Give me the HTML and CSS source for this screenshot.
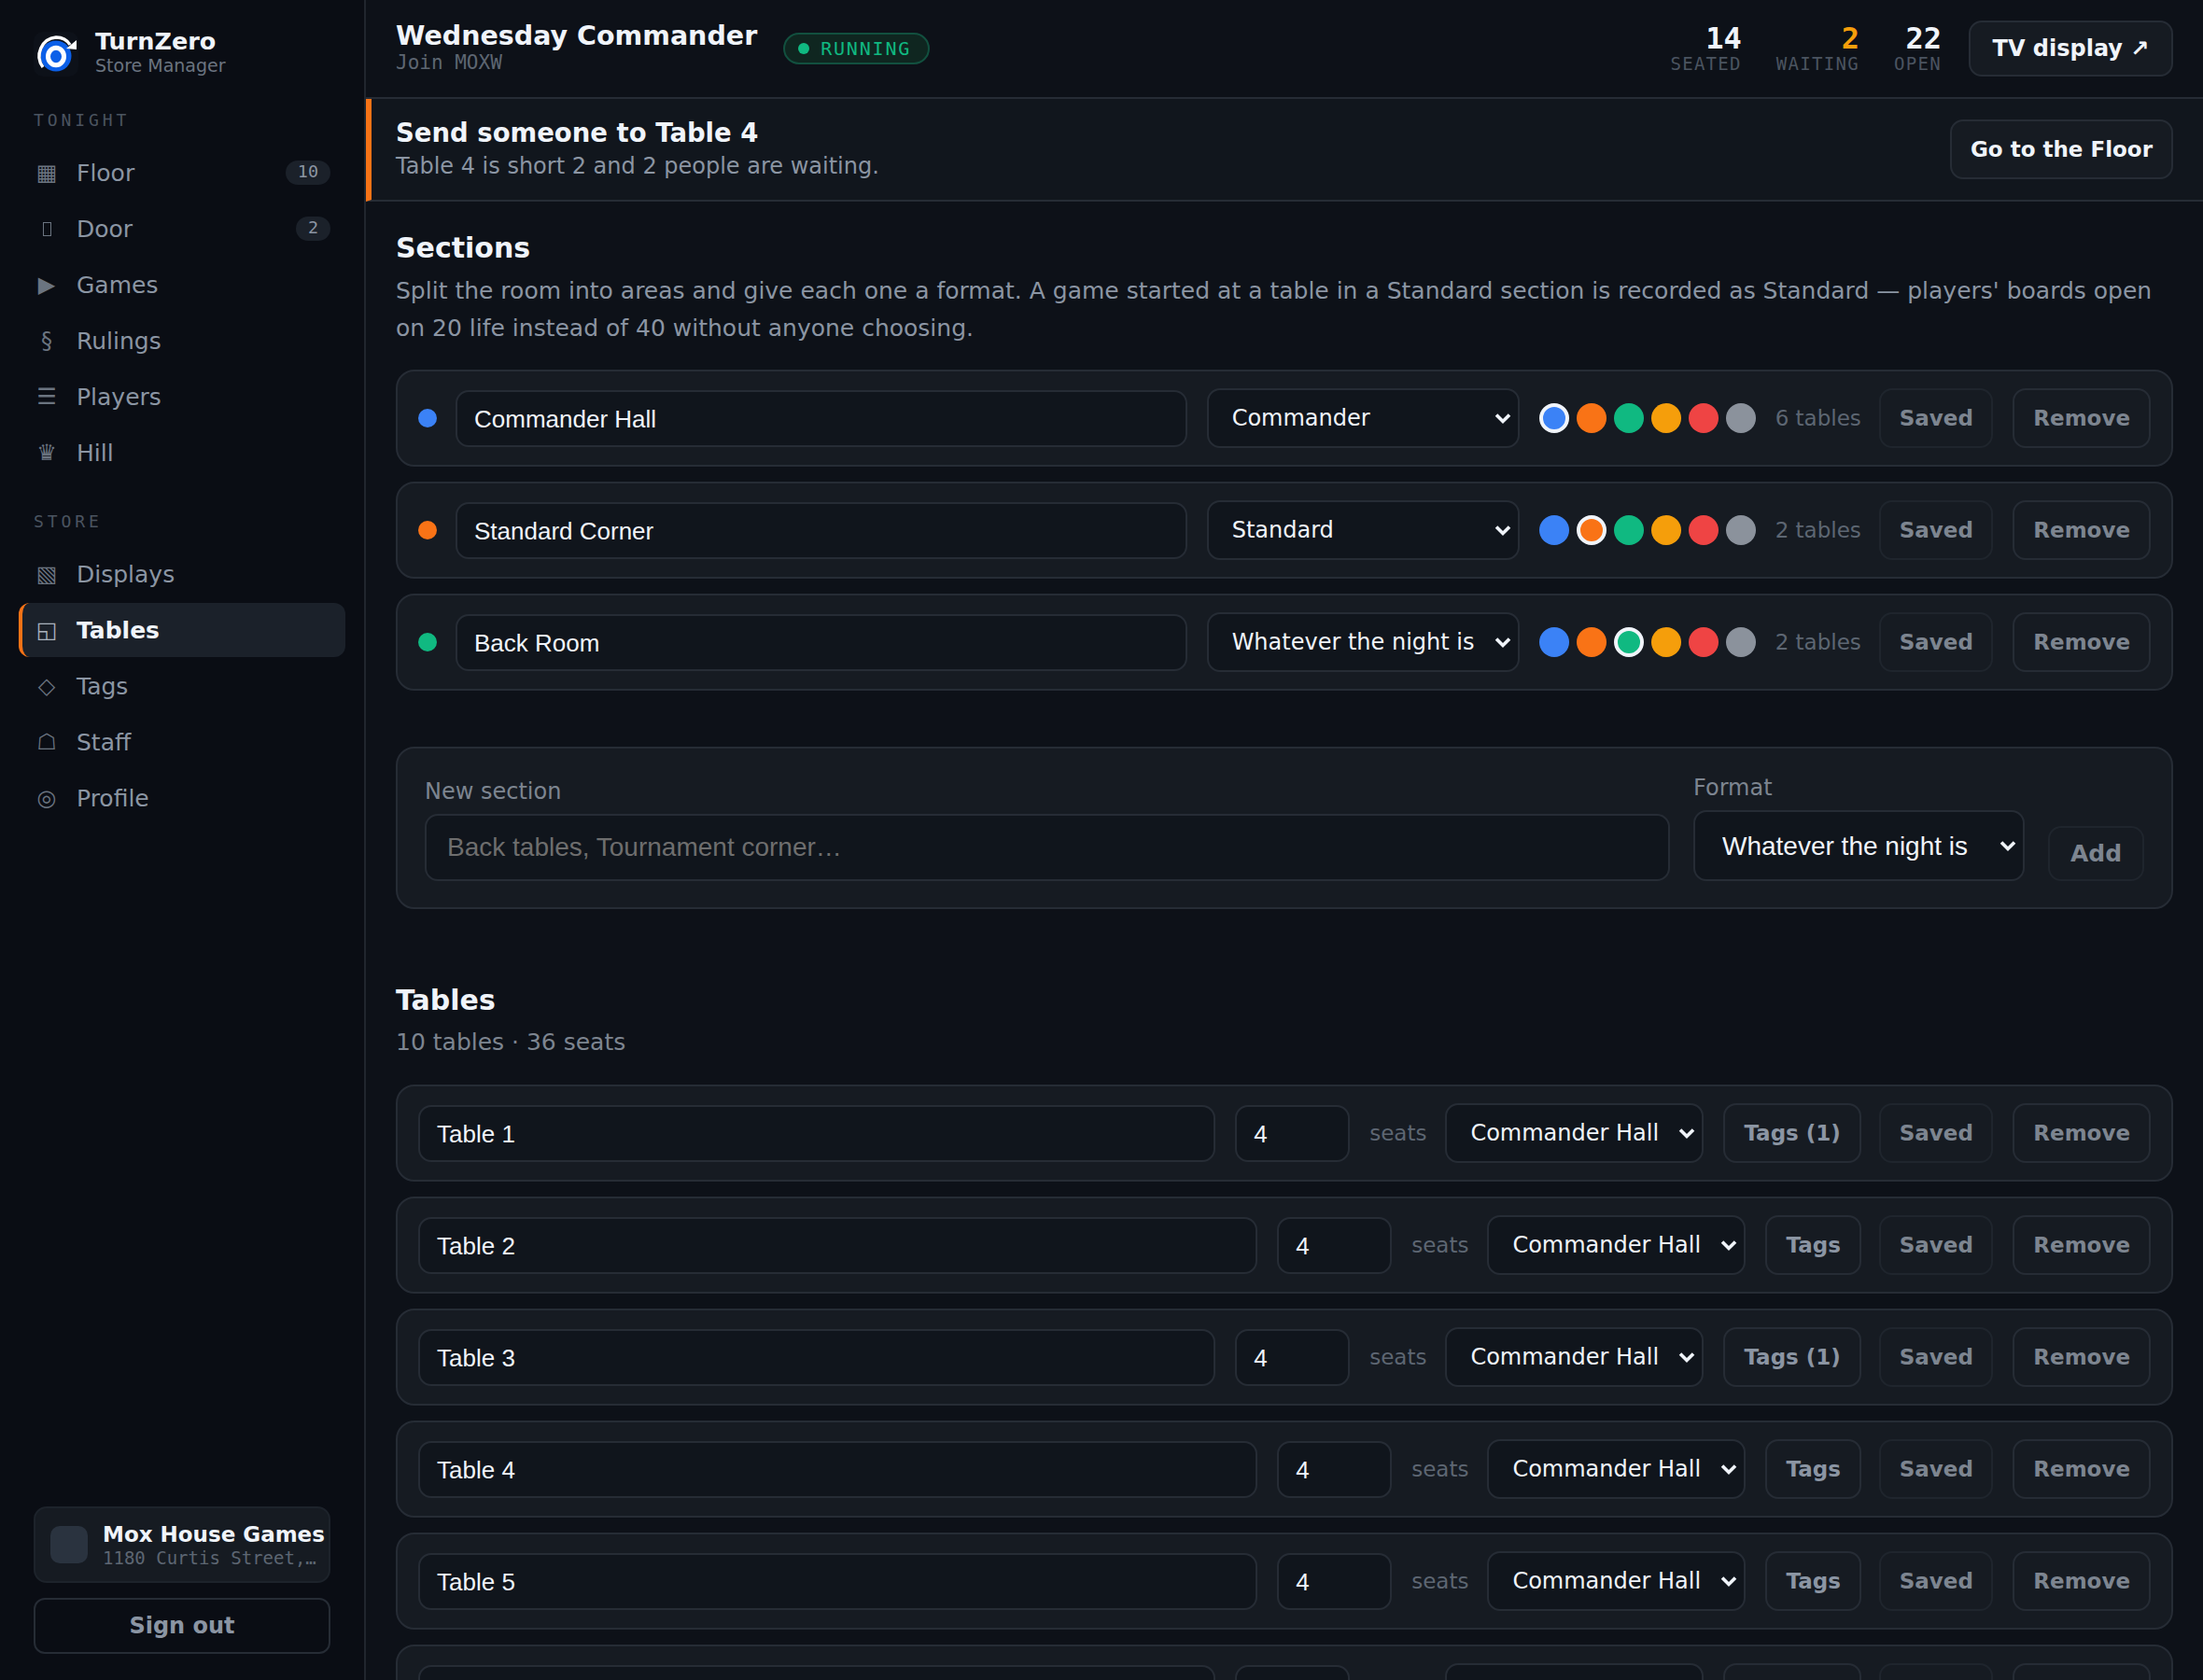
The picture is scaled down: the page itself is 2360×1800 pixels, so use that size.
FILE: index.html
```html
<!DOCTYPE html>
<html lang="en">
<head>
    <meta charset="UTF-8">
    <meta name="viewport" content="width=device-width, initial-scale=1.0">
    <title>TurnZero Store Manager</title>
    <link rel="stylesheet" href="styles.css">
</head>
<body>
    <aside class="sidebar">
        <div class="brand">
            <svg class="logo" width="48" height="48" viewBox="0 0 48 48">
                <rect width="48" height="48" rx="10" fill="#0d1119"/>
                <circle cx="24" cy="26" r="16.5" fill="#0b5fe8"/>
                <ellipse cx="24" cy="26.5" rx="8.5" ry="9.25" fill="none" stroke="#fff" stroke-width="5"/>
                <path d="M10 38 A 19.5 20 0 0 1 24 6 C 31 6 36 9 39 14" fill="none" stroke="#fff" stroke-width="3.4"/>
                <path d="M46 9 L46 19 L35 18 Z" fill="#fff"/>
            </svg>
            <div class="brand-text">
                <div class="brand-name">TurnZero</div>
                <div class="brand-sub">Store Manager</div>
            </div>
        </div>

        <div class="nav-label">TONIGHT</div>
        <nav class="nav">
            <a class="nav-item"><span class="nav-icon">▦</span>Floor<span class="badge">10</span></a>
            <a class="nav-item"><span class="nav-icon"><span class="door"></span></span>Door<span class="badge">2</span></a>
            <a class="nav-item"><span class="nav-icon">▶</span>Games</a>
            <a class="nav-item"><span class="nav-icon">§</span>Rulings</a>
            <a class="nav-item"><span class="nav-icon">☰</span>Players</a>
            <a class="nav-item"><span class="nav-icon">♛</span>Hill</a>
        </nav>

        <div class="nav-label nav-label-store">STORE</div>
        <nav class="nav">
            <a class="nav-item"><span class="nav-icon">▧</span>Displays</a>
            <a class="nav-item active"><span class="nav-icon">◱</span>Tables</a>
            <a class="nav-item"><span class="nav-icon">◇</span>Tags</a>
            <a class="nav-item"><span class="nav-icon">☖</span>Staff</a>
            <a class="nav-item"><span class="nav-icon">◎</span>Profile</a>
        </nav>

        <div class="side-foot">
            <div class="venue">
                <div class="venue-pic"></div>
                <div class="venue-text">
                    <div class="venue-name">Mox House Games</div>
                    <div class="venue-addr">1180 Curtis Street,…</div>
                </div>
            </div>
            <button class="signout">Sign out</button>
        </div>
    </aside>

    <main class="main">
        <header class="topbar">
            <div class="event">
                <div class="event-name">Wednesday Commander</div>
                <div class="event-join">Join MOXW</div>
            </div>
            <div class="pill"><span class="pill-dot"></span>RUNNING</div>
            <div class="stats">
                <div class="stat"><div class="stat-num">14</div><div class="stat-label">SEATED</div></div>
                <div class="stat"><div class="stat-num amber">2</div><div class="stat-label">WAITING</div></div>
                <div class="stat"><div class="stat-num">22</div><div class="stat-label">OPEN</div></div>
            </div>
            <button class="btn-top tv">TV display ↗</button>
        </header>

        <div class="alert">
            <div class="alert-text">
                <div class="alert-title">Send someone to Table 4</div>
                <div class="alert-sub">Table 4 is short 2 and 2 people are waiting.</div>
            </div>
            <button class="btn-top floor">Go to the Floor</button>
        </div>

        <div class="content">
            <h2 class="title">Sections</h2>
            <p class="intro">Split the room into areas and give each one a format. A game started at a table in a Standard section is recorded as Standard — players' boards open on 20 life instead of 40 without anyone choosing.</p>

            <div class="rows">
                <div class="row">
                    <span class="dot blue"></span>
                    <input class="field grow" type="text" value="Commander Hall">
                    <select class="sel sel-format"><option>Commander</option><option>Standard</option><option>Whatever the night is</option></select>
                    <div class="swatches"><span class="dot blue picked"></span><span class="dot orange"></span><span class="dot green"></span><span class="dot amberbg"></span><span class="dot red"></span><span class="dot grey"></span></div>
                    <span class="note">6 tables</span>
                    <button class="btn dim">Saved</button>
                    <button class="btn">Remove</button>
                </div>
                <div class="row">
                    <span class="dot orange"></span>
                    <input class="field grow" type="text" value="Standard Corner">
                    <select class="sel sel-format"><option>Standard</option><option>Commander</option><option>Whatever the night is</option></select>
                    <div class="swatches"><span class="dot blue"></span><span class="dot orange picked"></span><span class="dot green"></span><span class="dot amberbg"></span><span class="dot red"></span><span class="dot grey"></span></div>
                    <span class="note">2 tables</span>
                    <button class="btn dim">Saved</button>
                    <button class="btn">Remove</button>
                </div>
                <div class="row">
                    <span class="dot green"></span>
                    <input class="field grow" type="text" value="Back Room">
                    <select class="sel sel-format"><option>Whatever the night is</option><option>Commander</option><option>Standard</option></select>
                    <div class="swatches"><span class="dot blue"></span><span class="dot orange"></span><span class="dot green picked"></span><span class="dot amberbg"></span><span class="dot red"></span><span class="dot grey"></span></div>
                    <span class="note">2 tables</span>
                    <button class="btn dim">Saved</button>
                    <button class="btn">Remove</button>
                </div>
            </div>

            <form class="new-section">
                <label class="new-name">
                    <span class="new-label">New section</span>
                    <input class="new-field" type="text" placeholder="Back tables, Tournament corner…">
                </label>
                <label class="new-format">
                    <span class="new-label">Format</span>
                    <select class="new-sel"><option>Whatever the night is</option><option>Commander</option><option>Standard</option></select>
                </label>
                <button class="btn add" type="button">Add</button>
            </form>

            <h2 class="title title-tables">Tables</h2>
            <p class="count">10 tables · 36 seats</p>

            <div class="rows">
                <div class="row row-table">
                    <input class="field grow" type="text" value="Table 1">
                    <input class="field seats" type="number" value="4">
                    <span class="note">seats</span>
                    <select class="sel sel-section"><option>Commander Hall</option><option>Standard Corner</option><option>Back Room</option></select>
                    <button class="btn tags">Tags (1)</button>
                    <button class="btn dim">Saved</button>
                    <button class="btn">Remove</button>
                </div>
                <div class="row row-table">
                    <input class="field grow" type="text" value="Table 2">
                    <input class="field seats" type="number" value="4">
                    <span class="note">seats</span>
                    <select class="sel sel-section"><option>Commander Hall</option><option>Standard Corner</option><option>Back Room</option></select>
                    <button class="btn tags">Tags</button>
                    <button class="btn dim">Saved</button>
                    <button class="btn">Remove</button>
                </div>
                <div class="row row-table">
                    <input class="field grow" type="text" value="Table 3">
                    <input class="field seats" type="number" value="4">
                    <span class="note">seats</span>
                    <select class="sel sel-section"><option>Commander Hall</option><option>Standard Corner</option><option>Back Room</option></select>
                    <button class="btn tags">Tags (1)</button>
                    <button class="btn dim">Saved</button>
                    <button class="btn">Remove</button>
                </div>
                <div class="row row-table">
                    <input class="field grow" type="text" value="Table 4">
                    <input class="field seats" type="number" value="4">
                    <span class="note">seats</span>
                    <select class="sel sel-section"><option>Commander Hall</option><option>Standard Corner</option><option>Back Room</option></select>
                    <button class="btn tags">Tags</button>
                    <button class="btn dim">Saved</button>
                    <button class="btn">Remove</button>
                </div>
                <div class="row row-table">
                    <input class="field grow" type="text" value="Table 5">
                    <input class="field seats" type="number" value="4">
                    <span class="note">seats</span>
                    <select class="sel sel-section"><option>Commander Hall</option><option>Standard Corner</option><option>Back Room</option></select>
                    <button class="btn tags">Tags</button>
                    <button class="btn dim">Saved</button>
                    <button class="btn">Remove</button>
                </div>
                <div class="row row-table">
                    <input class="field grow" type="text" value="Table 6">
                    <input class="field seats" type="number" value="4">
                    <span class="note">seats</span>
                    <select class="sel sel-section"><option>Commander Hall</option><option>Standard Corner</option><option>Back Room</option></select>
                    <button class="btn tags">Tags (1)</button>
                    <button class="btn dim">Saved</button>
                    <button class="btn">Remove</button>
                </div>
            </div>
        </div>
    </main>
</body>
</html>
```

FILE: styles.css
```css
* {
    box-sizing: border-box;
}
body {
    height: 100vh;
    margin: 0;
    display: flex;
    overflow: hidden;
    background: #0d1118;
    color: #f0f4fa;
    font-family: "DejaVu Sans", sans-serif;
}
button {
    font-family: "DejaVu Sans", sans-serif;
    cursor: pointer;
}

/* sidebar */
.sidebar {
    width: 392px;
    flex-shrink: 0;
    display: flex;
    flex-direction: column;
    padding: 34px 20px 28px 20px;
    background: #0a0d14;
    border-right: 2px solid #21262e;
}
.brand {
    display: flex;
    align-items: center;
    gap: 18px;
    margin-bottom: 4px;
    padding-left: 16px;
}
.logo {
    flex-shrink: 0;
}
.brand-text {
    margin-top: -4px;
}
.brand-name {
    font-size: 25.5px;
    font-weight: 700;
    line-height: 28px;
}
.brand-sub {
    font-size: 19px;
    line-height: 24px;
    color: #6b7480;
}
.nav-label {
    margin: 32px 0 16px 16px;
    font-family: "DejaVu Sans Mono", monospace;
    font-size: 18px;
    line-height: 22px;
    letter-spacing: 3.9px;
    color: #4b5460;
}
.nav-label-store {
    margin-top: 34px;
}
.nav {
    display: flex;
    flex-direction: column;
    gap: 2px;
}
.nav-item {
    display: flex;
    align-items: center;
    height: 58px;
    padding-left: 12px;
    padding-right: 16px;
    border-left: 4px solid transparent;
    border-radius: 12px;
    font-size: 25px;
    color: #8b95a3;
}
.nav-item.active {
    background: #1b212a;
    border-left-color: #f97316;
    color: #f0f4fa;
    font-weight: 700;
}
.nav-icon {
    display: flex;
    justify-content: center;
    align-items: center;
    width: 28px;
    margin-right: 18px;
    font-size: 24px;
    font-weight: 400;
    color: #6b7480;
}
.active .nav-icon {
    color: #a9b2bd;
}
/* this glyph has no font, it shows as an empty box */
.door {
    width: 9px;
    height: 15px;
    border: 1px solid #6b7480;
}
.badge {
    margin-left: auto;
    padding: 0 13px;
    height: 26px;
    border-radius: 13px;
    background: #1b212a;
    font-family: "DejaVu Sans Mono", monospace;
    font-size: 18.4px;
    line-height: 24px;
    color: #8b95a3;
}
.side-foot {
    margin-top: auto;
    padding: 0 16px;
}
.venue {
    display: flex;
    align-items: center;
    gap: 16px;
    height: 82px;
    padding-left: 16px;
    background: #161b22;
    border: 2px solid #1d232b;
    border-radius: 14px;
    white-space: nowrap;
}
.venue-pic {
    width: 40px;
    height: 40px;
    flex-shrink: 0;
    border-radius: 10px;
    background: #2a333f;
}
.venue-name {
    font-size: 23px;
    font-weight: 700;
    line-height: 27px;
}
.venue-addr {
    font-family: "DejaVu Sans Mono", monospace;
    font-size: 19px;
    line-height: 22px;
    color: #5d6672;
}
.signout {
    width: 100%;
    height: 60px;
    margin-top: 16px;
    background: transparent;
    border: 2px solid #262c35;
    border-radius: 12px;
    font-size: 24px;
    font-weight: 700;
    color: #8b95a3;
}

/* top of the main column */
.main {
    flex: 1;
    min-width: 0;
}
.topbar {
    display: flex;
    align-items: center;
    height: 106px;
    padding: 0 32px;
    border-bottom: 2px solid #262c35;
}
.event {
    margin-bottom: 3px;
}
.event-name {
    font-size: 28.5px;
    font-weight: 700;
    line-height: 32px;
}
.event-join {
    font-family: "DejaVu Sans Mono", monospace;
    font-size: 21px;
    line-height: 24px;
    color: #5d6672;
}
.pill {
    display: flex;
    align-items: center;
    height: 34px;
    margin-left: 28px;
    padding: 0 18px 0 14px;
    background: #0f2620;
    border: 2px solid #12503f;
    border-radius: 17px;
    font-family: "DejaVu Sans Mono", monospace;
    font-size: 20px;
    letter-spacing: 1.8px;
    color: #10b981;
}
.pill-dot {
    width: 12px;
    height: 12px;
    margin-right: 12px;
    border-radius: 50%;
    background: #10b981;
}
.stats {
    display: flex;
    gap: 37px;
    margin-left: auto;
    margin-right: 29px;
}
.stat {
    text-align: right;
    font-family: "DejaVu Sans Mono", monospace;
}
.stat-num {
    font-size: 32px;
    font-weight: 700;
    line-height: 32px;
}
.stat-num.amber {
    color: #f59e0b;
}
.stat-label {
    font-size: 19px;
    line-height: 22px;
    letter-spacing: 1.3px;
    color: #4b5460;
}
.btn-top {
    background: #161b22;
    border: 2px solid #262c35;
    border-radius: 14px;
    font-weight: 700;
    color: #f0f4fa;
}
.tv {
    width: 219px;
    height: 60px;
    font-size: 24px;
}
.floor {
    width: 239px;
    height: 64px;
    font-size: 23px;
}
.alert {
    display: flex;
    align-items: center;
    justify-content: space-between;
    height: 110px;
    padding: 0 32px 0 26px;
    background: #11161d;
    border-left: 6px solid #f97316;
    border-bottom: 2px solid #262c35;
}
.alert-text {
    padding-bottom: 4px;
}
.alert-title {
    margin-bottom: 3px;
    font-size: 27.5px;
    font-weight: 700;
    line-height: 36px;
}
.alert-sub {
    font-size: 24px;
    line-height: 30px;
    color: #8b95a3;
}

/* sections and tables */
.content {
    padding: 30px 32px 0 32px;
}
.title {
    margin: 0;
    font-size: 30px;
    line-height: 40px;
    font-weight: 700;
}
.intro {
    margin: 6px 0 0 0;
    font-size: 25px;
    line-height: 40px;
    color: #8b95a3;
}
.rows {
    display: flex;
    flex-direction: column;
    gap: 16px;
    margin-top: 24px;
}
.row {
    display: flex;
    align-items: center;
    gap: 21px;
    height: 104px;
    padding: 0 22px;
    background: #161b22;
    border: 2px solid #262c35;
    border-radius: 20px;
}
.grow {
    flex: 1;
    min-width: 0;
}
.field {
    height: 61px;
    padding: 2px 18px 0 18px;
    background: #10151c;
    border: 2px solid #262c35;
    border-radius: 14px;
    font-family: "Liberation Sans", sans-serif;
    font-size: 26px;
    color: #f0f4fa;
}
.seats {
    width: 123px;
    flex: none;
}
.dot {
    flex-shrink: 0;
    width: 20px;
    height: 20px;
    margin-right: -1px;
    border-radius: 50%;
}
.blue { background: #3b82f6; }
.orange { background: #f97316; }
.green { background: #10b981; }
.amberbg { background: #f59e0b; }
.red { background: #ef4444; }
.grey { background: #8b929c; }
.swatches {
    display: flex;
    gap: 8px;
}
.swatches .dot {
    width: 32px;
    height: 32px;
    margin-right: 0;
}
.swatches .picked {
    border: 4px solid #f0f4fa;
}
.sel,
.new-sel {
    appearance: none;
    background-color: #10151c;
    background-image: url("data:image/svg+xml,%3Csvg xmlns='http://www.w3.org/2000/svg' width='18' height='13'%3E%3Cpath d='M2 2.5 L9 9.5 L16 2.5' fill='none' stroke='%23f0f4fa' stroke-width='3.6'/%3E%3C/svg%3E");
    background-repeat: no-repeat;
    background-position: right 7px center;
    border: 2px solid #262c35;
    border-radius: 14px;
    color: #f0f4fa;
}
.sel {
    height: 64px;
    padding: 0 14px 0 25px;
    font-family: "DejaVu Sans", sans-serif;
    font-size: 24px;
}
.sel-format {
    width: 335px;
}
.sel-section {
    width: 277px;
}
.note {
    margin-right: -1.5px;
    font-size: 23px;
    color: #5d6672;
    white-space: nowrap;
}
.row-table .note {
    margin-right: -1px;
}
.btn {
    height: 64px;
    padding: 0 20px;
    background: #161b22;
    border: 2px solid #262c35;
    border-radius: 14px;
    font-size: 23px;
    font-weight: 700;
    color: #7d8590;
}
.btn.dim {
    width: 122px;
    padding: 0;
    border-color: #1f252d;
}
.btn.tags {
    margin-right: -1.5px;
    color: #8b95a3;
}

/* new section form */
.new-section {
    display: flex;
    align-items: flex-end;
    height: 174px;
    margin-top: 60px;
    padding: 0 29px 28px 29px;
    background: #161b22;
    border: 2px solid #262c35;
    border-radius: 20px;
}
.new-label {
    display: block;
    margin-bottom: 9px;
    font-size: 24px;
    line-height: 30px;
    color: #7d8590;
}
.new-name {
    flex: 1;
}
.new-field {
    display: block;
    width: 100%;
    height: 72px;
    padding: 0 22px;
    background: #10151c;
    border: 2px solid #262c35;
    border-radius: 14px;
    font-family: "Liberation Sans", sans-serif;
    font-size: 28px;
    color: #f0f4fa;
}
.new-field::placeholder {
    color: #6e6e6e;
}
.new-format {
    width: 355px;
    margin-left: 25px;
}
.new-sel {
    display: block;
    width: 100%;
    height: 76px;
    padding: 0 14px 0 29px;
    font-family: "Liberation Sans", sans-serif;
    font-size: 28px;
}
.btn.add {
    width: 103px;
    height: 59px;
    margin-left: 25px;
    padding: 0;
    border-color: #1f252d;
    font-size: 25px;
}
.title-tables {
    margin-top: 78px;
}
.count {
    margin: 7px 0 0 0;
    font-size: 25px;
    line-height: 36px;
    color: #7d8590;
}
.count + .rows {
    margin-top: 27px;
}
```
